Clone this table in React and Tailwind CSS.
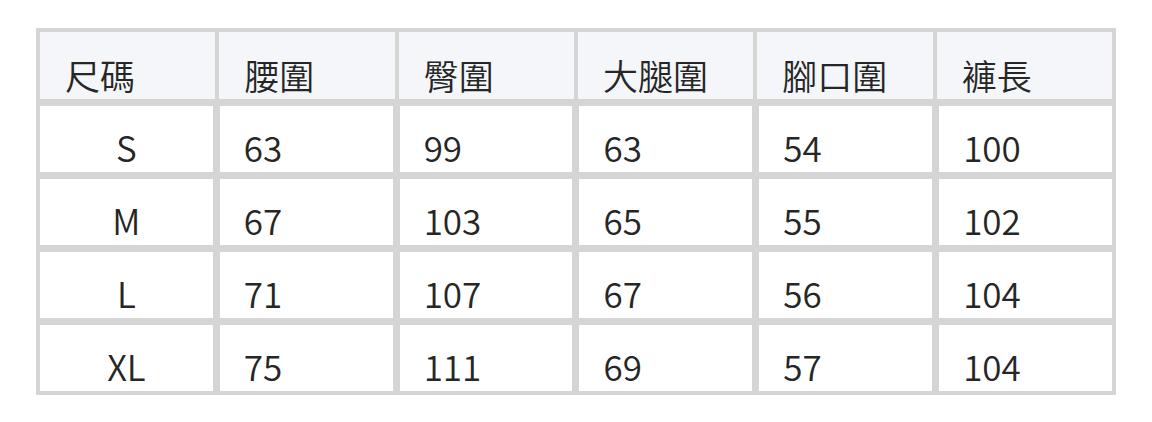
const headers = ['尺碼', '腰圍', '臀圍', '大腿圍', '腳口圍', '褲長'];

const rows = [
  ['S', '63', '99', '63', '54', '100'],
  ['M', '67', '103', '65', '55', '102'],
  ['L', '71', '107', '67', '56', '104'],
  ['XL', '75', '111', '69', '57', '104'],
];

const App = () => {
  return (
    <div
      className="w-[1152px] h-[422px] bg-white pt-[28px] pl-[36px] text-[#262626] font-[350]"
      style={{ fontFamily: '"Noto Sans CJK TC", "Noto Sans", sans-serif' }}
    >
      <div className="w-[1080px] bg-[#d5d5d5] p-[4px] flex flex-col gap-[7px]">
        {/* header row */}
        <div className="grid grid-cols-6 gap-[4px]">
          {headers.map((h) => (
            <div
              key={h}
              className="h-[67px] bg-[#f5f6fa] pt-[25px] pl-[25px] text-[35px] leading-[35px]"
            >
              {h}
            </div>
          ))}
        </div>
        {rows.map((row) => (
          <div key={row[0]} className="grid grid-cols-6 gap-[7px]">
            {row.map((cell, i) => (
              <div
                key={i}
                className={
                  i === 0
                    ? 'h-[66px] bg-white pt-[23px] text-center text-[35px] leading-[35px]'
                    : 'h-[66px] bg-white pt-[23px] pl-[24px] text-[35px] leading-[35px]'
                }
              >
                {cell}
              </div>
            ))}
          </div>
        ))}
      </div>
    </div>
  );
};

export default App;
